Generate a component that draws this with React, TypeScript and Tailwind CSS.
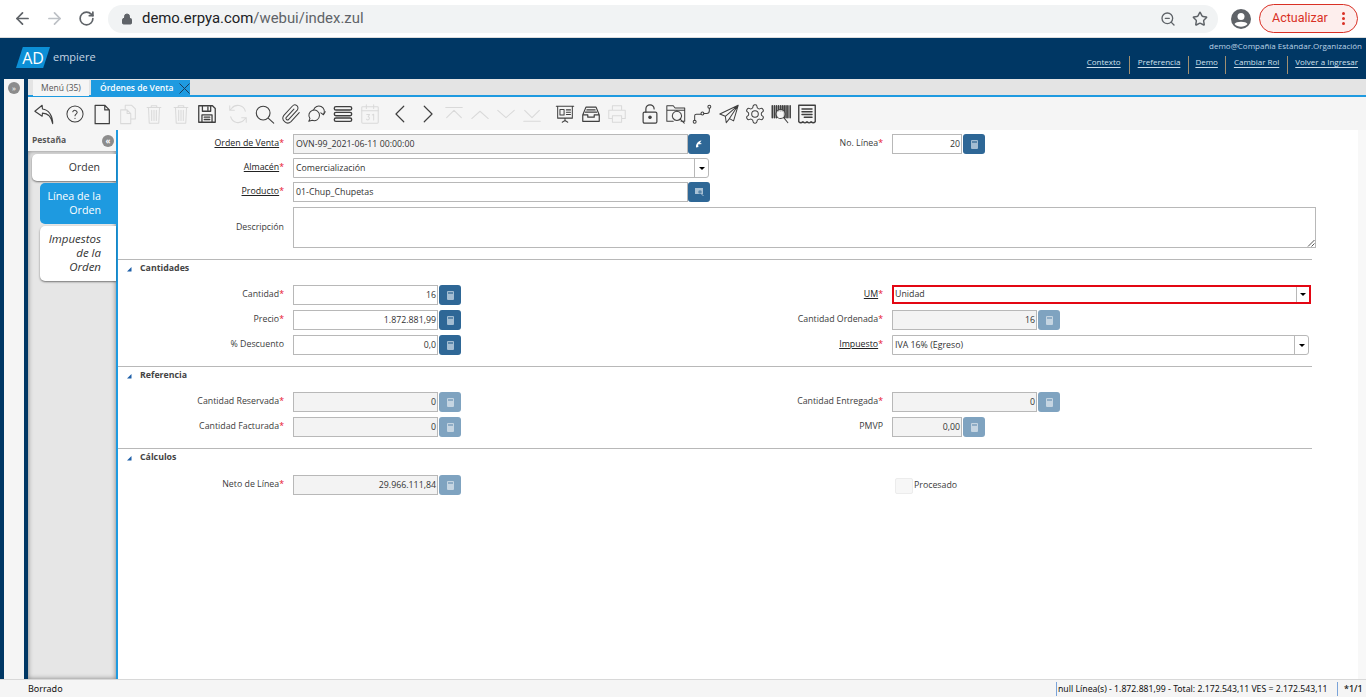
import React from "react";
import { ArrowLeft, ArrowRight, RotateCw, Lock, ZoomOut, Star } from "lucide-react";

const font = "font-['Open_Sans','Noto_Sans',sans-serif]";

function Ico({ d, children, off, size = 22, sw = 1.1 }: { d?: string; children?: React.ReactNode; off?: boolean; size?: number; sw?: number }) {
  return (
    <svg width={size} height={size} viewBox="0 0 24 24" fill="none" stroke={off ? "#d9d9d9" : "#3f3f3f"} strokeWidth={sw} strokeLinecap="round" strokeLinejoin="round">
      {d && <path d={d} />}
      {children}
    </svg>
  );
}

type Tool = { ml: string; off?: boolean; d?: string; node?: React.ReactNode; sw?: number };

const tools: Tool[] = [
  { ml: "ml-0", sw: 1.2, d: "M10 2.500 L2 9 L10 14.500 L10.300 11 C15.500 11 20 14.500 21.500 22.500 C21.500 14 17 7 10.300 6.500 Z" },
  { ml: "ml-[5px]", node: <><circle cx="12" cy="12" r="8.800" /><path d="M9.600 9.600a2.500 2.500 0 0 1 4.800.6c0 1.900-2.400 2-2.400 3.800" /><path d="M12 16.700v.3" /></> },
  { ml: "ml-0", sw: 1.3, d: "M4.500 2.500h10.500l5 5v15H4.500z M15 2.500v5h5" },
  { ml: "ml-0", off: true, d: "M9 7V2.500h7l4 4v11h-5 M4 7.500h7l4 4v11H4z M11 7.500v4h4" },
  { ml: "ml-0", off: true, d: "M4.500 5h15 M9 5V3h6v2 M6 5l.8 17h10.400L18 5 M9.500 8v11 M12 8v11 M14.500 8v11" },
  { ml: "ml-0", off: true, d: "M4.500 5h15 M9 5V3h6v2 M6 5l.8 17h10.400L18 5 M9.500 8v11 M12 8v11 M14.500 8v11" },
  { ml: "ml-0", sw: 1.4, d: "M3 3h15l3 3v15H3z M7 3v6h9V3 M13 4.500v3 M6.500 21v-8h11v8 M9 15.500h6 M9 18h6" },
  { ml: "ml-[5px]", off: true, d: "M20 9a8.500 8.500 0 0 0-15-3L3 8 M3 3v5h5 M4 15a8.500 8.500 0 0 0 15 3l2-2 M21 21v-5h-5" },
  { ml: "ml-0", sw: 1.2, d: "M10 3.500a7.500 7.500 0 1 0 0 15a7.500 7.500 0 1 0 0-15z M15.500 16.500l6 5.500" },
  { ml: "ml-0", node: <path d="M21 10.500l-9 9.800a5.200 5.200 0 0 1-7.800-6.800l9.400-10.200a3.400 3.400 0 0 1 5.200 4.400l-9.300 10.100a1.700 1.700 0 0 1-2.600-2.200l8.300-9" /> },
  { ml: "ml-0", node: <><path d="M3 20l1.300-3a5.800 5.800 0 1 1 2.500 1.900z" /><path d="M8.300 7.500a6 6 0 1 1 10.800 5" /><path d="M21 9.500l-2 3.300-2.800-2" /></> },
  { ml: "ml-0", sw: 1.500, node: <><rect x="2.500" y="4" width="19" height="3.700" rx="1.800" /><rect x="2.500" y="10.200" width="19" height="3.700" rx="1.800" /><rect x="2.500" y="16.400" width="19" height="3.700" rx="1.800" /></> },
  { ml: "ml-0", off: true, node: <><rect x="3" y="4" width="18" height="18" rx="1" /><path d="M3 8.500h18 M8 2v4 M16 2v4" /><path d="M8.500 12.500h3l-1.500 2.500c1.800 0 1.800 3.500-.2 3.500-.8 0-1.400-.3-1.600-.9 M14.500 13l1.500-.8v6.300" /></> },
  { ml: "ml-[5px]", sw: 1.300, d: "M15 3.500 L6.500 12 L15 20.500" },
  { ml: "ml-0", sw: 1.300, d: "M9 3.500 L17.500 12 L9 20.500" },
  { ml: "ml-0", off: true, d: "M3 5h18 M4 16l8-8 8 8" },
  { ml: "ml-0", off: true, d: "M3 17l9-8 9 8" },
  { ml: "ml-0", off: true, d: "M3 8l9 8 9-8" },
  { ml: "ml-0", off: true, d: "M4 8l8 8 8-8 M3 20h18" },
  { ml: "ml-[6px]", node: <><path d="M2.500 3.500h19 M4 3.500v13h16v-13 M12 16.500v3 M9 21l3-2 3 2" /><path d="M6.500 7h4.500v6H6.500z M13.500 7.500h4.500 M13.500 10h4.500 M13.500 12.500h4.500" /></> },
  { ml: "ml-0", sw: 1.300, d: "M3 13l3.500-8.500h11L21 13v7H3z M3 13h5.500v2.500h7V13H21 M7.500 7.500h9 M6 10h12" },
  { ml: "ml-0", off: true, node: <path d="M7 8V3h10v5 M7 17H3V8h18v9h-4 M7 14h10v7H7z" /> },
  { ml: "ml-[6px]", sw: 1.300, node: <><rect x="4.500" y="10" width="15" height="12" rx="1.500" /><path d="M7.500 10V6.500a4.500 4.500 0 0 1 9 0" /><circle cx="12" cy="15.500" r="1.300" fill="#3f3f3f" /></> },
  { ml: "ml-0", d: "M2 20V3h7l2 2.500h10.500V20h-4 M2 20h7 M2 8h19.500 M13 9a5 5 0 1 0 .01 0z M16.500 17.500l4.500 4.500" },
  { ml: "ml-0", sw: 1.100, node: <><circle cx="4" cy="20.500" r="1.600" /><circle cx="12.500" cy="11.500" r="1.600" /><circle cx="20" cy="4" r="1.600" /><path d="M4 19v-5a1.800 1.800 0 0 1 1.800-1.800h5 M14 11.500h3a3 3 0 0 0 3-3V5.600" /></> },
  { ml: "ml-0", d: "M22 2.500L2 12l6 2.500 1 7 3.500-4.500 4.500 2.500z M22 2.500L8 14.500 M22 2.500L12.500 17" },
  { ml: "ml-0", node: <><circle cx="12" cy="12" r="3.600" /><path d="M12.220 2h-.44a2 2 0 0 0-2 2v.18a2 2 0 0 1-1 1.730l-.43.250a2 2 0 0 1-2 0l-.15-.08a2 2 0 0 0-2.730.730l-.22.380a2 2 0 0 0 .730 2.730l.15.100a2 2 0 0 1 1 1.720v.510a2 2 0 0 1-1 1.740l-.15.090a2 2 0 0 0-.730 2.730l.22.380a2 2 0 0 0 2.730.730l.15-.08a2 2 0 0 1 2 0l.43.250a2 2 0 0 1 1 1.730V20a2 2 0 0 0 2 2h.44a2 2 0 0 0 2-2v-.18a2 2 0 0 1 1-1.730l.43-.25a2 2 0 0 1 2 0l.15.080a2 2 0 0 0 2.730-.73l.22-.39a2 2 0 0 0-.73-2.730l-.15-.08a2 2 0 0 1-1-1.740v-.5a2 2 0 0 1 1-1.740l.15-.09a2 2 0 0 0 .73-2.730l-.22-.38a2 2 0 0 0-2.730-.73l-.15.080a2 2 0 0 1-2 0l-.43-.25a2 2 0 0 1-1-1.730V4a2 2 0 0 0-2-2z" /></> },
  { ml: "ml-0", node: <><path d="M2.500 3v13 M4.800 3v13 M7 3v13 M9.200 3v6 M11.400 3v6 M13.500 3v6 M15.500 3v13 M17.500 3v13 M19.500 3v13 M22 3v13" strokeWidth="1.700" /><circle cx="11.500" cy="12" r="5" fill="#f5f5f5" fillOpacity="0.75" /><path d="M15 16l4.500 5.500" /></> },
  { ml: "ml-0", sw: 1.500, d: "M3 2.500h18v18c-1.500 1.500-3 1.500-4.500 0-1.500 1.500-3 1.500-4.500 0-1.500 1.500-3 1.500-4.500 0-1.500 1.500-3 1.500-4.500 0z M6.500 6.500h11 M6.500 9.500h11 M6.500 12.500h11 M9 15.500h8.500" },
];

function Calc({ off }: { off?: boolean }) {
  return (
    <span className={`w-[22px] h-[20px] rounded-[3px] flex items-center justify-center shrink-0 ml-px ${off ? "bg-[#7fa3c0]" : "bg-[#2e6796]"}`}>
      <span className={`w-[7px] h-[9px] rounded-[1px] flex flex-col p-px ${off ? "bg-[#c5d5e2]" : "bg-[#a3bdd2]"}`}>
        <span className={`h-[2px] ${off ? "bg-[#8fadc6]" : "bg-[#5c88ab]"}`} />
      </span>
    </span>
  );
}

function Req() {
  return <span className="text-[#e8112d]">*</span>;
}

function Label({ text, req, link, w, lh = "leading-[19px]" }: { text: string; req?: boolean; link?: boolean; w: string; lh?: string }) {
  return (
    <div className={`${w} shrink-0 text-right pr-[9px] text-[8.800px] ${lh} text-[#3c3c3c] whitespace-nowrap`}>
      <span className={link ? "underline underline-offset-1 text-[#222]" : ""}>{text}</span>
      {req && <Req />}
    </div>
  );
}

function Num({ v, off, w = "w-[145px]" }: { v: string; off?: boolean; w?: string }) {
  return (
    <div className="flex">
      <div className={`${w} h-[20px] border border-[#b8b8b8] text-right pr-px text-[8.800px] leading-[18px] text-[#333] ${off ? "bg-[#f3f3f3]" : "bg-white"}`}>{v}</div>
      <Calc off={off} />
    </div>
  );
}

function Combo({ v, w }: { v: string; w: string }) {
  return (
    <div className={`${w} h-[20px] flex border border-[#b8b8b8] rounded-r-[3px] bg-white text-[8.800px] leading-[18px] text-[#333]`}>
      <span className="flex-1 pl-[2px]">{v}</span>
      <span className="w-[14px] border-l border-[#b8b8b8] flex items-center justify-center">
        <span className="border-x-[3px] border-x-transparent border-t-[3px] border-t-black" />
      </span>
    </div>
  );
}

function Row({ ll, lr, ln, rl, rr, rn, left, right, mt }: { ll: string; lr?: boolean; ln?: boolean; rl?: string; rr?: boolean; rn?: boolean; left: React.ReactNode; right?: React.ReactNode; mt: string }) {
  return (
    <div className={`flex h-[20px] ${mt}`}>
      <Label text={ll} req={lr} link={ln} w="w-[175px]" />
      <div className="w-[433px] shrink-0">{left}</div>
      {rl ? <Label text={rl} req={rr} link={rn} w="w-[166px]" /> : <div className="w-[166px]" />}
      <div>{right}</div>
    </div>
  );
}

function Section({ title, mt }: { title: string; mt: string }) {
  return (
    <div className={mt}>
      <div className="w-[1194px] h-px bg-[#b8b8b8]" />
      <div className="flex items-center h-[17px] pl-[8px]">
        <svg width="6" height="6" viewBox="0 0 6 6"><path d="M5.500 1v4.500H1z" fill="#1d5fa8" /></svg>
        <span className="ml-[8px] text-[8.800px] font-bold text-[#444]">{title}</span>
      </div>
    </div>
  );
}

const links = [
  { t: "Contexto", s: "mr-[8px]" },
  { t: "Preferencia", s: "ml-[8px] mr-[8px]" },
  { t: "Demo", s: "ml-[6px] mr-[7px]" },
  { t: "Cambiar Rol", s: "ml-[8px] mr-[8px]" },
  { t: "Volver a Ingresar", s: "ml-[7px]" },
];

export default function App() {
  return (
    <div className={`${font} w-[1366px] h-[697px] overflow-hidden flex flex-col bg-white`}>
      {/* browser bar */}
      <div className="h-[38px] shrink-0 flex items-center bg-white border-b border-[#dcdcdc] font-['Roboto',sans-serif]">
        <ArrowLeft size={19} className="ml-[13px] text-[#5f6368]" strokeWidth={2.200} />
        <ArrowRight size={19} className="ml-[13px] text-[#bdc1c6]" strokeWidth={2.200} />
        <RotateCw size={17} className="ml-[14px] text-[#5f6368]" strokeWidth={2.400} />
        <div className="ml-[13px] w-[1110px] h-[28px] rounded-full bg-[#f1f3f4] flex items-center">
          <Lock size={12} className="ml-[13px] text-[#5f6368]" fill="#5f6368" />
          <span className="ml-[9px] text-[14.900px] text-[#202124]">demo.erpya.com<span className="text-[#5f6368]">/webui/index.zul</span></span>
          <ZoomOut size={16} className="ml-auto text-[#5f6368]" />
          <Star size={16} className="ml-[16px] mr-[10px] text-[#5f6368]" strokeWidth={2.200} />
        </div>
        <svg width="20" height="20" viewBox="0 0 20 20" className="ml-[13px]"><circle cx="10" cy="10" r="10" fill="#5f6368" /><circle cx="10" cy="7.500" r="3.500" fill="#fff" /><path d="M3.500 15c1.500-3 11.500-3 13 0-3 3.500-10 3.500-13 0z" fill="#fff" /></svg>
        <div className="ml-[8px] w-[99px] h-[29px] rounded-full border border-[#d93025] bg-[#fdeeed] flex items-center text-[#d93025] text-[12.500px] pl-[12px]">
          Actualizar
          <span className="ml-auto mr-[12px] flex flex-col gap-[2px]">
            <span className="w-[3px] h-[3px] rounded-full bg-[#d93025]" />
            <span className="w-[3px] h-[3px] rounded-full bg-[#d93025]" />
            <span className="w-[3px] h-[3px] rounded-full bg-[#d93025]" />
          </span>
        </div>
      </div>

      {/* app header */}
      <div className="h-[41px] shrink-0 bg-[#003764] flex justify-between">
        <div className="flex items-center pl-[16px] pb-[2px]">
          <div className="w-[34px] h-[21px] bg-[#0c8fd6] [clip-path:polygon(20%_0,100%_0,80%_100%,0_100%)] flex items-center justify-center text-white text-[16px] leading-none">AD</div>
          <span className="ml-[3px] text-[11px] text-[#c5d5e2]">empiere</span>
        </div>
        <div className="flex flex-col items-end pr-[4px] text-[8px]">
          <div className="mt-[2px] h-[11px] leading-[11px] text-[#bcd3e6]">demo@Compañía Estándar.Organización</div>
          <div className="mt-[5px] flex h-[18px] items-start pr-[4px]">
            {links.map((l, i) => (
              <React.Fragment key={l.t}>
                {i > 0 && <span className="w-px h-[18px] bg-[#a08f70]" />}
                <span className={`underline underline-offset-2 leading-[12px] text-[#d0e0ec] ${l.s}`}>{l.t}</span>
              </React.Fragment>
            ))}
          </div>
        </div>
      </div>

      {/* body */}
      <div className="flex-1 min-h-0 flex">
        <div className="w-[28px] shrink-0 border-x-4 border-[#003764] bg-[#f5f5f5] flex justify-center pt-[3px]">
          <span className="w-[12px] h-[12px] rounded-full bg-[#8c8c8c] text-white text-[8px] leading-[11px] text-center">»</span>
        </div>
        <div className="flex-1 min-w-0 flex flex-col">
          <div className="h-[18px] shrink-0 bg-[#e4e4e4] border-b-2 border-[#1e9ae0] flex pl-[5px] pt-px text-[8.500px]">
            <div className="w-[56px] h-[16px] bg-[#f5f5f5] text-center leading-[16px] text-[#555]">Menú (35)</div>
            <div className="ml-[2px] w-[99px] h-[16px] bg-[#1e9ae0] text-white font-semibold flex items-center pl-[9px]">
              Órdenes de Venta
              <svg width="11" height="11" viewBox="0 0 11 11" className="ml-auto"><path d="M.5.500l10 10M10.500.500l-10 10" stroke="#1c3d5c" strokeWidth="1" /></svg>
            </div>
          </div>
          <div className="h-[33px] shrink-0 bg-[#f5f5f5] flex items-center pl-[3px]">
            {tools.map((t, i) => (
              <span key={i} className={`w-[26.300px] shrink-0 flex justify-center ${t.ml}`}>
                <Ico d={t.d} off={t.off} sw={t.sw}>{t.node}</Ico>
              </span>
            ))}
          </div>
          <div className="flex-1 min-h-0 flex">
            {/* side tabs */}
            <div className="w-[90px] shrink-0 border-r-2 border-[#1e9ae0] flex flex-col">
              <div className="h-[21px] shrink-0 bg-[#f5f5f5] flex items-center justify-between pl-[4px] pr-[2px] text-[8.500px] font-bold text-[#555]">
                Pestaña
                <span className="w-[12px] h-[12px] rounded-full bg-[#8c8c8c] text-white text-[8px] leading-[11px] text-center">«</span>
              </div>
              <div className="flex-1 bg-[#e6e6e6] shadow-[inset_0_0_5px_rgba(0,0,0,0.45)] flex flex-col pt-[3px]">
                <div className="ml-[4px] h-[27px] bg-white rounded-l-[5px] text-right pr-[16px] leading-[26px] text-[10.500px] text-[#333] shadow-[0_1px_2px_rgba(0,0,0,0.5)]">Orden</div>
                <div className="ml-[12px] mt-[2px] h-[41px] bg-[#1e9ae0] rounded-l-[5px] text-right pr-[15px] py-[6px] leading-[14px] text-[10.700px] text-white">Línea de la<br />Orden</div>
                <div className="ml-[12px] mt-[2px] h-[55px] bg-white rounded-l-[5px] text-right pr-[15px] py-[6px] leading-[14px] text-[11.500px] italic text-[#333] shadow-[0_1px_2px_rgba(0,0,0,0.5)]">Impuestos<br />de la<br />Orden</div>
              </div>
            </div>
            {/* form */}
            <div className="flex-1 min-w-0 pt-[4px] border-r-[8px] border-[#f8f8f8]">
              <Row mt="mt-0" ll="Orden de Venta" lr ln rl="No. Línea" rr
                left={<div className="flex"><div className="w-[395px] h-[20px] border border-[#b8b8b8] bg-[#f3f3f3] pl-[2px] text-[8.800px] leading-[18px] text-[#333]">OVN-99_2021-06-11 00:00:00</div><span className="w-[22px] h-[20px] rounded-[3px] bg-[#2e6796] flex items-center justify-center"><svg width="8" height="8" viewBox="0 0 8 8"><path d="M6.500.500C3 1 .8 3.500 1 7.500L3.500 7 3 4.500 7 4 5 2.800z" fill="#fff" /></svg></span></div>}
                right={<Num v="20" w="w-[70px]" />} />
              <Row mt="mt-[4px]" ll="Almacén" lr ln left={<Combo v="Comercialización" w="w-[416px]" />} />
              <Row mt="mt-[4px]" ll="Producto" lr ln
                left={<div className="flex"><div className="w-[395px] h-[20px] border border-[#b8b8b8] bg-white pl-[2px] text-[8.800px] leading-[18px] text-[#333]">01-Chup_Chupetas</div><span className="w-[22px] h-[20px] rounded-[3px] bg-[#2e6796] flex items-center justify-center"><svg width="9" height="8" viewBox="0 0 9 8"><rect x="0" y="0" width="8" height="6" fill="#a9c1d5" /><circle cx="5" cy="4" r="1.800" fill="#5c88ab" /><path d="M6 5.500l2.500 2.500" stroke="#a9c1d5" /></svg></span></div>} />
              <div className="flex mt-[5px]">
                <Label text="Descripción" w="w-[175px]" lh="leading-[40px]" />
                <div className="relative w-[1023px] h-[41px] border border-[#b8b8b8] bg-white">
                  <svg width="8" height="8" viewBox="0 0 8 8" className="absolute right-0 bottom-0"><path d="M1 7.500L7.500 1M4.500 7.500L7.500 4.500" stroke="#555" strokeWidth="1" /></svg>
                </div>
              </div>

              <Section title="Cantidades" mt="mt-[11px]" />
              <Row mt="mt-[8px]" ll="Cantidad" lr left={<Num v="16" />} rl="UM" rr rn
                right={<div className="w-[419px] h-[19px] flex border-2 border-[#e30613] bg-white text-[8.800px] leading-[15px] text-[#333]"><span className="flex-1 pl-px">Unidad</span><span className="w-[13px] border-l border-[#b8b8b8] flex items-center justify-center"><span className="border-x-[3px] border-x-transparent border-t-[3px] border-t-black" /></span></div>} />
              <Row mt="mt-[5px]" ll="Precio" lr left={<Num v="1.872.881,99" />} rl="Cantidad Ordenada" rr right={<Num v="16" off />} />
              <Row mt="mt-[5px]" ll="% Descuento" left={<Num v="0,0" />} rl="Impuesto" rr rn right={<Combo v="IVA 16% (Egreso)" w="w-[417px]" />} />

              <Section title="Referencia" mt="mt-[11px]" />
              <Row mt="mt-[8px]" ll="Cantidad Reservada" lr left={<Num v="0" off />} rl="Cantidad Entregada" rr right={<Num v="0" off />} />
              <Row mt="mt-[5px]" ll="Cantidad Facturada" lr left={<Num v="0" off />} rl="PMVP" right={<Num v="0,00" off w="w-[70px]" />} />

              <Section title="Cálculos" mt="mt-[11px]" />
              <Row mt="mt-[9px]" ll="Neto de Línea" lr left={<Num v="29.966.111,84" off />}
                right={<div className="flex items-center h-[20px] pl-[3px] pt-px text-[8.800px] text-[#3c3c3c]"><span className="w-[18px] h-[16px] bg-[#f7f7f7] border border-[#ececec] rounded-[2px]" /><span className="ml-px">Procesado</span></div>} />
            </div>
          </div>
        </div>
      </div>

      {/* status bar */}
      <div className="h-[18px] shrink-0 border-t border-[#d8d8d8] bg-[#f5f5f5] flex items-center font-['Noto_Sans',sans-serif] text-[9px] text-[#111] pl-[28px] whitespace-nowrap">
        <span>Borrado</span>
        <span className="ml-auto border-l border-[#7aa3d8] pl-px h-[14px] leading-[14px] w-[281px] text-[8.700px]">null Línea(s) - 1.872.881,99 - Total: 2.172.543,11 VES = 2.172.543,11</span>
        <span className="border-l border-[#7aa3d8] h-[14px] leading-[14px] pl-[6px] w-[29px] font-medium">*1/1</span>
      </div>
    </div>
  );
}
